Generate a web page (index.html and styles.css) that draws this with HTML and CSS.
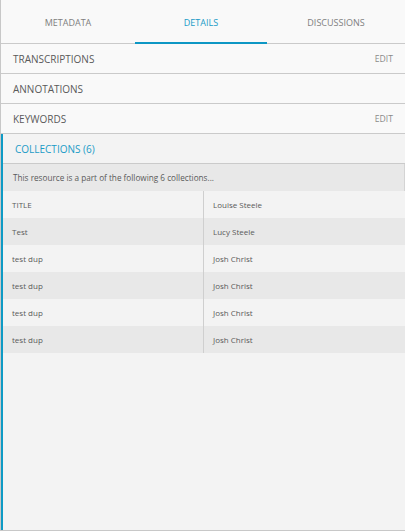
FILE: index.html
```html
<!DOCTYPE html>
<html>
<head>
<meta charset="utf-8">
<link rel="stylesheet" href="styles.css">
</head>
<body>
<div class="panel">
  <div class="tabs">
    <div class="tab">METADATA</div>
    <div class="tab active">DETAILS</div>
    <div class="tab">DISCUSSIONS</div>
  </div>
  <div class="row"><span>TRANSCRIPTIONS</span><span class="edit">EDIT</span></div>
  <div class="row"><span>ANNOTATIONS</span></div>
  <div class="row"><span>KEYWORDS</span><span class="edit">EDIT</span></div>
  <div class="collections">
    <div class="row coll-head"><span>COLLECTIONS (6)</span></div>
    <div class="intro">This resource is a part of the following 6 collections...</div>
    <div class="table">
      <div class="tr"><div class="td">TITLE</div><div class="td right">Louise Steele</div></div>
      <div class="tr alt"><div class="td">Test</div><div class="td right">Lucy Steele</div></div>
      <div class="tr"><div class="td">test dup</div><div class="td right">Josh Christ</div></div>
      <div class="tr alt"><div class="td">test dup</div><div class="td right">Josh Christ</div></div>
      <div class="tr"><div class="td">test dup</div><div class="td right">Josh Christ</div></div>
      <div class="tr alt"><div class="td">test dup</div><div class="td right">Josh Christ</div></div>
    </div>
  </div>
</div>
</body>
</html>
```
FILE: styles.css
```css
html, body {
  margin: 0;
  padding: 0;
  background: #f3f3f3;
}
body {
  font-family: "Open Sans", "DejaVu Sans", sans-serif;
  color: #5a5a5a;
}
.panel {
  width: 405px;
  height: 531px;
  box-sizing: border-box;
  border-left: 1px solid #c8c8c8;
  border-bottom: 1px solid #c8c8c8;
  display: flex;
  flex-direction: column;
  background: #f3f3f3;
}
.tabs {
  display: grid;
  grid-template-columns: 134px 132px 1fr;
  height: 43px;
  border-bottom: 1px solid #cacaca;
  background: #f9f9f9;
}
.tab {
  display: flex;
  align-items: center;
  justify-content: center;
  font-size: 9px;
  color: #808080;
  padding-top: 2px;
}
.tab.active {
  color: #1a9bc7;
  border-bottom: 2px solid #0d97c4;
  margin-bottom: -1px;
  padding-top: 3px;
}
.row {
  height: 29px;
  border-bottom: 1px solid #cacaca;
  background: #f9f9f9;
  display: flex;
  align-items: center;
  justify-content: space-between;
  padding: 0 12px 0 12px;
  font-size: 10px;
  color: #5a5a5a;
}
.edit {
  font-size: 8.6px;
  color: #8a8a8a;
}
.collections {
  flex: 1;
  border-left: 2px solid #0e9ac5;
  background: #f3f3f3;
}
.row.coll-head {
  background: #f3f3f3;
  color: #1a9bc7;
  padding-left: 12px;
}
.intro {
  height: 27px;
  box-sizing: border-box;
  background: #e8e8e8;
  border-right: 1px solid #d4d4d4;
  font-size: 8.2px;
  display: flex;
  align-items: center;
  padding-left: 10px;
  color: #5a5a5a;
}
.table {
  display: flex;
  flex-direction: column;
}
.tr {
  display: grid;
  grid-template-columns: 200px 1fr;
  height: 27px;
  background: #f3f3f3;
}
.tr.alt {
  background: #e8e8e8;
}
.td {
  display: flex;
  align-items: center;
  padding-left: 9px;
  padding-bottom: 1px;
  font-size: 8px;
  color: #5a5a5a;
}
.td.right {
  border-left: 1px solid #cfcfcf;
}
```
